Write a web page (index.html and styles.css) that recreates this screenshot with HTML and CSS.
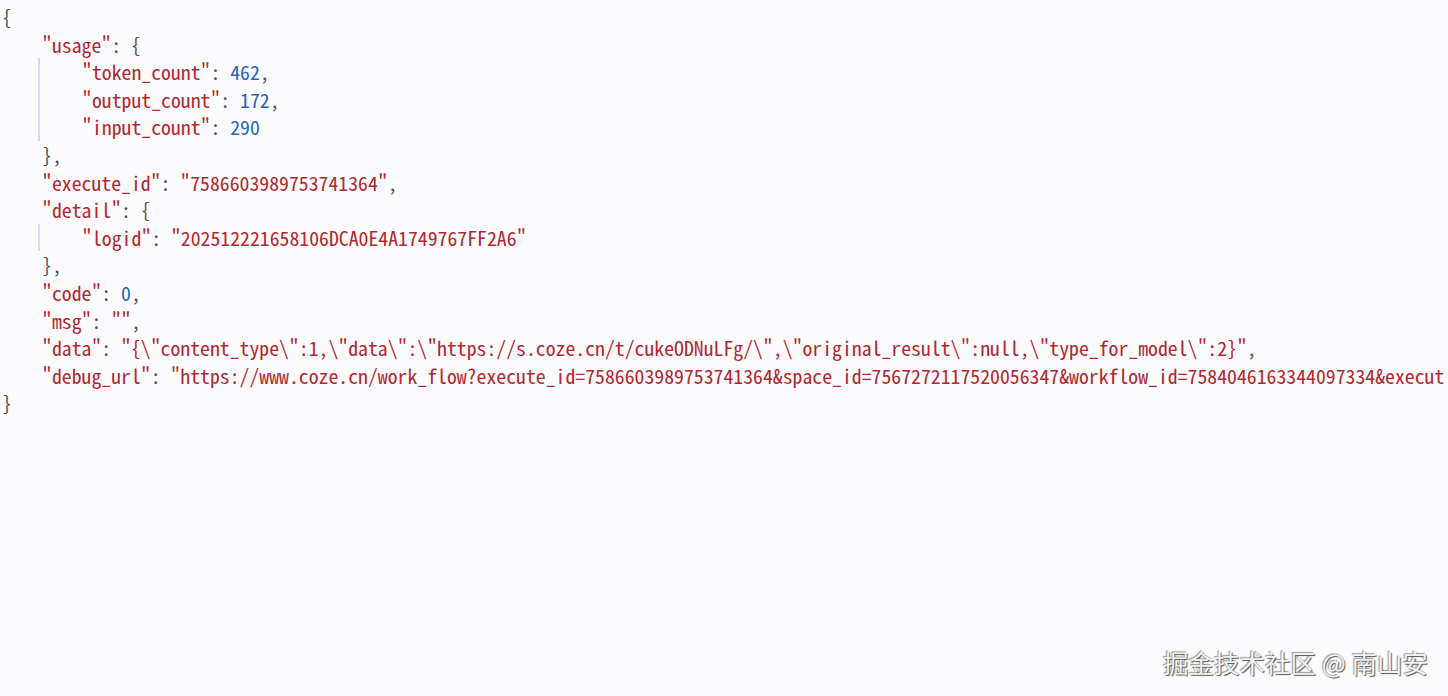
FILE: index.html
```html
<!DOCTYPE html>
<html lang="zh">
<head>
<meta charset="utf-8">
<title>JSON</title>
<link rel="stylesheet" href="styles.css">
</head>
<body>
<div class="json">
  <div class="line"><span class="p">{</span></div>
  <div class="body">
    <div class="line"><span class="s">"usage"</span><span class="p">: {</span></div>
    <div class="nest">
      <div class="line"><span class="s">"token_count"</span><span class="p">: </span><span class="n">462</span><span class="p">,</span></div>
      <div class="line"><span class="s">"output_count"</span><span class="p">: </span><span class="n">172</span><span class="p">,</span></div>
      <div class="line"><span class="s">"input_count"</span><span class="p">: </span><span class="n">290</span></div>
    </div>
    <div class="line"><span class="p">},</span></div>
    <div class="line"><span class="s">"execute_id"</span><span class="p">: </span><span class="s">"7586603989753741364"</span><span class="p">,</span></div>
    <div class="line"><span class="s">"detail"</span><span class="p">: {</span></div>
    <div class="nest">
      <div class="line"><span class="s">"logid"</span><span class="p">: </span><span class="s">"202512221658106DCA0E4A1749767FF2A6"</span></div>
    </div>
    <div class="line"><span class="p">},</span></div>
    <div class="line"><span class="s">"code"</span><span class="p">: </span><span class="n">0</span><span class="p">,</span></div>
    <div class="line"><span class="s">"msg"</span><span class="p">: </span><span class="s">""</span><span class="p">,</span></div>
    <div class="line"><span class="s">"data"</span><span class="p">: </span><span class="s">"{\"content_type\":1,\"data\":\"https://s.coze.cn/t/cukeODNuLFg/\",\"original_result\":null,\"type_for_model\":2}"</span><span class="p">,</span></div>
    <div class="line"><span class="s">"debug_url"</span><span class="p">: </span><span class="s">"https://www.coze.cn/work_flow?execute_id=7586603989753741364&amp;space_id=7567272117520056347&amp;workflow_id=7584046163344097334&amp;execut</span></div>
  </div>
  <div class="line"><span class="p">}</span></div>
</div>
<div class="watermark">掘金技术社区 @ 南山安</div>
</body>
</html>
```

FILE: styles.css
```css
html, body {
  margin: 0;
  padding: 0;
  width: 1448px;
  height: 696px;
  overflow: hidden;
  background: #fcfbfe;
}
body {
  position: relative;
}
.json {
  padding: 3px 0 0 2px;
  font-family: "Noto Sans Mono CJK SC", "Liberation Mono", monospace;
  font-size: 19.75px;
  color: #555;
}
.line {
  height: 27.6px;
  line-height: 27.6px;
  white-space: pre;
}
.body {
  padding-left: 40px;
}
.nest {
  margin-left: -4px;
  border-left: 2px solid #dcd8f2;
  padding-left: 42px;
}
.s {
  color: #b3272f;
}
.n {
  color: #2a64b8;
}
.p {
  color: #555;
}
.watermark {
  position: absolute;
  right: 20px;
  bottom: 18px;
  font-family: "Noto Sans CJK SC", sans-serif;
  font-size: 25.5px;
  line-height: 32px;
  color: #f2f2f2;
  text-shadow: 1px 1px 1px #555, -1px -1px 1px #999;
}
```
